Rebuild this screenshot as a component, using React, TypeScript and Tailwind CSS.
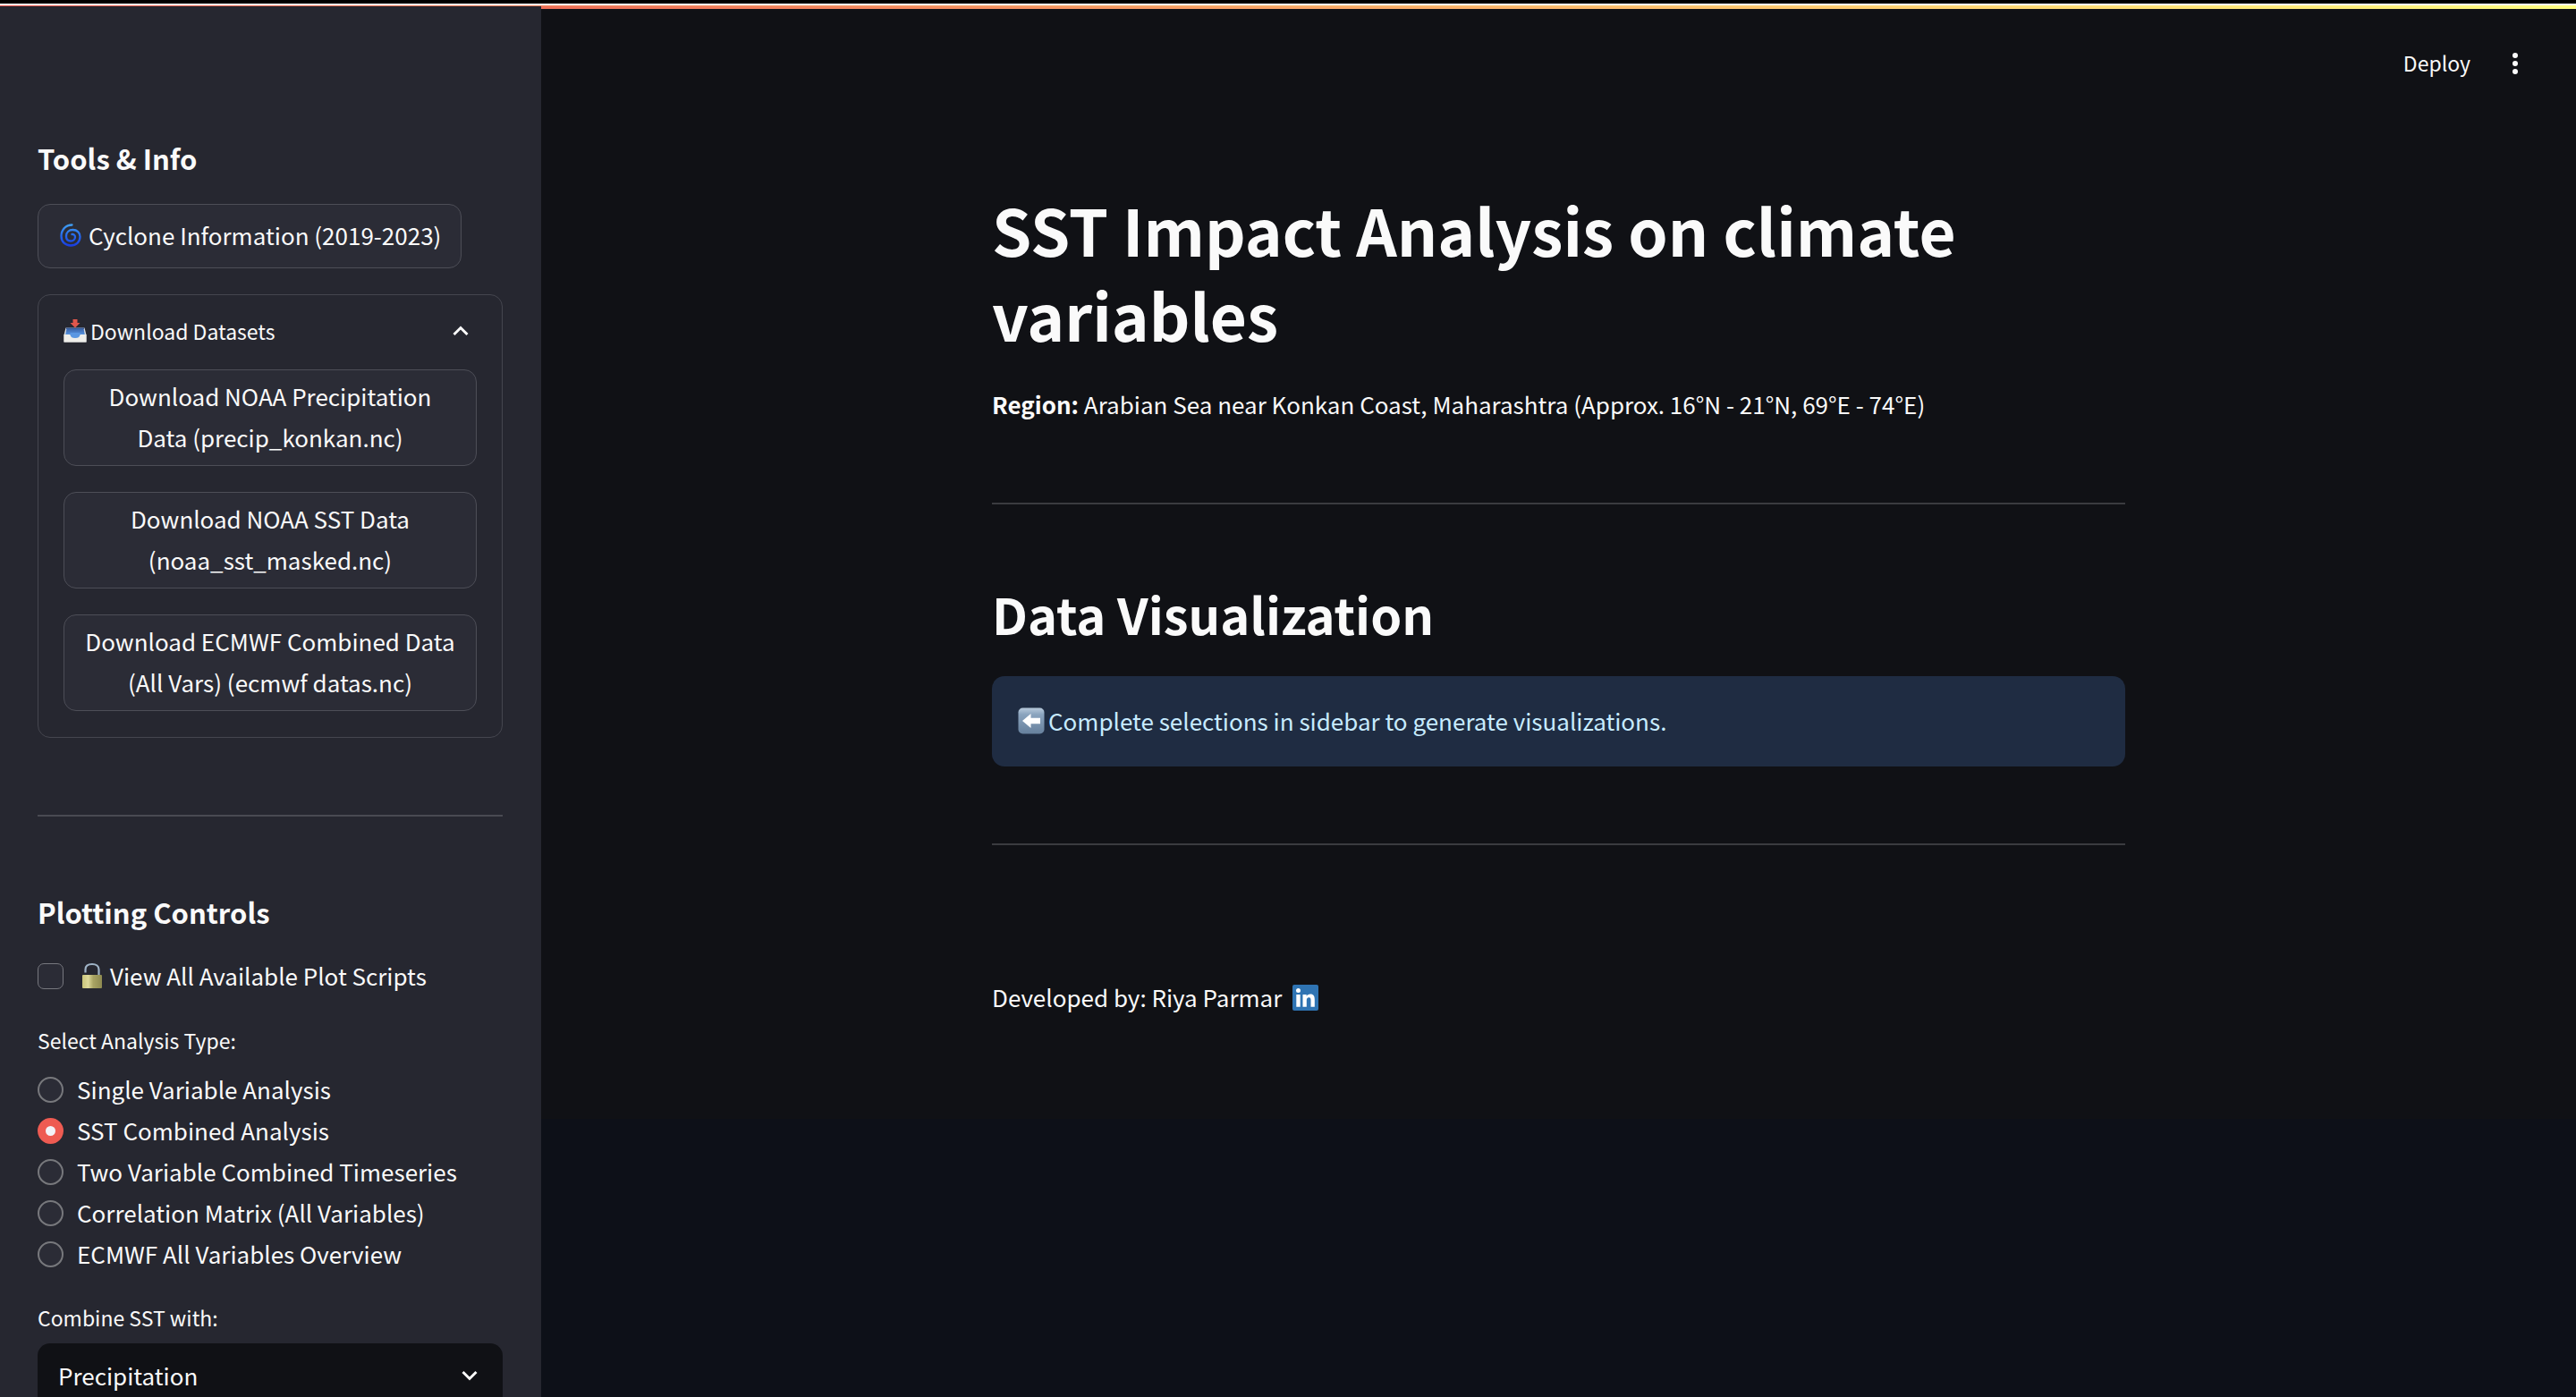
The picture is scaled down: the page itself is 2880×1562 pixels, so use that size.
import { useState } from "react";

const datasets = [
  "Download NOAA Precipitation Data (precip_konkan.nc)",
  "Download NOAA SST Data (noaa_sst_masked.nc)",
  "Download ECMWF Combined Data (All Vars) (ecmwf datas.nc)",
];

const analysisTypes = [
  "Single Variable Analysis",
  "SST Combined Analysis",
  "Two Variable Combined Timeseries",
  "Correlation Matrix (All Variables)",
  "ECMWF All Variables Overview",
];

function CycloneIcon() {
  return (
    <svg viewBox="0 0 24 26" className="h-[26px] w-6 shrink-0" fill="none" aria-hidden="true">
      <defs>
        <linearGradient id="cyclone" x1="0" y1="0" x2="0" y2="1">
          <stop offset="0" stopColor="#3f9cf0" />
          <stop offset="0.55" stopColor="#2467ee" />
          <stop offset="1" stopColor="#1a3fe0" />
        </linearGradient>
      </defs>
      <path
        d="M13.500 1.500C6.500 1.500 1.500 7 1.500 14C1.500 20.500 6 24.500 12 24.500C18 24.500 22.500 20.500 22.500 14.800C22.500 10 19 7 14.500 7C10 7 7 10 7 14C7 17.500 9 19.500 12 19.500C15 19.500 17 17.500 17 15C17 12.800 15.200 11.800 13.500 12"
        stroke="url(#cyclone)"
        strokeWidth="2.300"
        strokeLinecap="round"
      />
    </svg>
  );
}

function InboxIcon() {
  return (
    <svg viewBox="0 0 26 26" className="h-[26px] w-[26px] shrink-0" aria-hidden="true">
      <defs>
        <linearGradient id="tray" x1="0" y1="0" x2="0" y2="1">
          <stop offset="0" stopColor="#3a63a8" />
          <stop offset="1" stopColor="#5b9ae8" />
        </linearGradient>
      </defs>
      <path d="M2.500 9.500H23.500L25.500 17.500V25.500H.5V17.500Z" fill="#d9dde2" />
      <path d="M3 9.500H23V11H3Z" fill="#35578f" />
      <path d="M3.500 10.500H22.500L24 18H2Z" fill="url(#tray)" />
      <path d="M.5 17H7.500C8 20 10 21 13 21S18 20 18.500 17H25.500V25.500H.5Z" fill="#efeeea" />
      <path d="M7.500 15H18.500V17C18 20 16 21 13 21S8 20 7.500 17Z" fill="#5b97e2" />
      <path d="M10.500 0H15.500V4H18.500L13 9.500L7.500 4H10.500Z" fill="#e0574c" />
    </svg>
  );
}

function LockIcon() {
  return (
    <svg viewBox="0 0 24 30" className="h-[30px] w-6 shrink-0" aria-hidden="true">
      <defs>
        <linearGradient id="brass" x1="0" y1="0" x2="1" y2="0">
          <stop offset="0" stopColor="#c9c47a" />
          <stop offset="0.3" stopColor="#ded99a" />
          <stop offset="0.55" stopColor="#a9a464" />
          <stop offset="1" stopColor="#8d8950" />
        </linearGradient>
      </defs>
      <path
        d="M4.500 11.500V8C4.500 4 7.500 2 12 2S19.500 4 19.500 8V15"
        fill="none"
        stroke="#9fb3c6"
        strokeWidth="2.200"
      />
      <rect x="1" y="14" width="22" height="15" rx="1" fill="url(#brass)" />
    </svg>
  );
}

function ArrowIcon() {
  return (
    <svg viewBox="0 0 30 30" className="h-[30px] w-[30px] shrink-0" aria-hidden="true">
      <defs>
        <linearGradient id="key" x1="0" y1="0" x2="0" y2="1">
          <stop offset="0" stopColor="#b9cbdc" />
          <stop offset="0.25" stopColor="#8ba4be" />
          <stop offset="1" stopColor="#66809c" />
        </linearGradient>
      </defs>
      <rect x="0.500" y="0.500" width="29" height="29" rx="5" fill="url(#key)" />
      <path d="M5 15L14.500 7V11.800H25V18.200H14.500V23Z" fill="#fff" />
    </svg>
  );
}

function LinkedInIcon() {
  return (
    <svg viewBox="0 0 29 29" className="h-[29px] w-[29px]" aria-hidden="true">
      <rect width="29" height="29" rx="2" fill="#2f74b3" />
      <circle cx="6.500" cy="6.500" r="2.500" fill="#fff" />
      <path
        d="M4.300 11H8.700V24.800H4.300ZM11.500 11H15.700V12.900C16.500 11.500 18 10.600 20 10.600C23.800 10.600 24.800 13.100 24.800 16.700V24.800H20.500V17.500C20.500 15.700 20.300 14.300 18.400 14.300C16.500 14.300 15.800 15.700 15.800 17.500V24.800H11.500Z"
        fill="#fff"
      />
    </svg>
  );
}

function Chevron({ className }: { className: string }) {
  return (
    <svg viewBox="0 0 20 14" className={className} fill="none" aria-hidden="true">
      <path d="M2.500 3L10 10.500L17.500 3" stroke="#fafafa" strokeWidth="3" />
    </svg>
  );
}

function Sidebar() {
  const [open, setOpen] = useState(true);
  const [analysis, setAnalysis] = useState(analysisTypes[1]);

  return (
    <aside className="flex w-[605px] shrink-0 flex-col items-stretch overflow-hidden bg-[#262730] pt-[148px] pr-[43px] pl-[42px]">
      <h2 className="text-[31px] leading-[44px] font-semibold">Tools &amp; Info</h2>
      <button
        type="button"
        className="mt-[29px] flex min-h-[72px] items-center gap-2 self-start rounded-[14px] border border-[#4d4e57] bg-[#2b2c36] pr-[22px] pb-0.5 pl-6"
      >
        <CycloneIcon />
        Cyclone Information (2019-2023)
      </button>

      <section className="mt-[29px] rounded-[14px] border border-[#45464f] px-[28px]">
        <button
          type="button"
          aria-expanded={open}
          onClick={() => setOpen(!open)}
          className="flex h-[83px] w-full items-center gap-1 pb-[3px] text-[23px]"
        >
          <InboxIcon />
          <span className="grow text-left">Download Datasets</span>
          <Chevron className="mr-2 h-[14px] w-5 rotate-180" />
        </button>
        {open && (
          <div className="flex flex-col gap-[29px] pb-[29px]">
            {datasets.map((name) => (
              <button
                key={name}
                type="button"
                className="rounded-[14px] border border-[#4d4e57] bg-[#2b2c36] px-[22px] pt-[6px] pb-2 text-center"
              >
                {name}
              </button>
            ))}
          </div>
        )}
      </section>

      <hr className="mt-[86px] border-t-2 border-[#494a52]" />

      <h2 className="mt-[85px] text-[31px] leading-[44px] font-semibold">Plotting Controls</h2>

      <label className="mt-[26px] flex items-center">
        <input
          type="checkbox"
          className="size-[29px] shrink-0 appearance-none rounded-[7px] border border-[#77787f] bg-[#2b2c36] checked:bg-[#ee5b52]"
        />
        <span className="ml-5 flex items-center gap-2">
          <LockIcon />
          View All Available Plot Scripts
        </span>
      </label>

      <fieldset className="mt-[29px]">
        <legend className="text-[23px] leading-[40px]">Select Analysis Type:</legend>
        <div className="mt-3 flex flex-col">
          {analysisTypes.map((type) => (
            <label key={type} className="flex items-center gap-[15px]">
              <input
                type="radio"
                name="analysis"
                checked={analysis === type}
                onChange={() => setAnalysis(type)}
                className="size-[29px] shrink-0 appearance-none rounded-full border-2 border-[#77787c] bg-[#2b2c36] checked:border-[9px] checked:border-[#ee5b52] checked:bg-[#f3f3f8]"
              />
              {type}
            </label>
          ))}
        </div>
      </fieldset>

      <label htmlFor="combine" className="mt-[28px] text-[23px] leading-[40px]">
        Combine SST with:
      </label>
      <div className="relative mt-[9px]">
        <select
          id="combine"
          className="h-[72px] w-full appearance-none rounded-[14px] bg-[#101115] px-[23px] text-[#fafafa]"
        >
          <option>Precipitation</option>
        </select>
        <Chevron className="pointer-events-none absolute top-[29px] right-[27px] h-[14px] w-5" />
      </div>
    </aside>
  );
}

function Main() {
  return (
    <main className="flex grow flex-col bg-[#0d1018]">
      <div className="h-[3px] shrink-0 bg-linear-to-r from-[#ed6f58] to-[#fffd80]" />
      <div className="bg-[#101115] pb-[113px]">
        <header className="flex h-[122px] items-center justify-end gap-[44px] pr-[62px] text-[23px]">
          <button type="button" className="pb-0.5">
            Deploy
          </button>
          <button type="button" aria-label="Main menu">
            <svg viewBox="0 0 12 26" className="h-[26px] w-3" fill="#fafafa" aria-hidden="true">
              <circle cx="6" cy="4" r="3" />
              <circle cx="6" cy="13" r="3" />
              <circle cx="6" cy="22" r="3" />
            </svg>
          </button>
        </header>

        <div className="mx-auto max-w-[1325px] px-[29px] pt-[77px]">
          <h1 className="text-[71px] leading-[95px] font-bold">
            SST Impact Analysis on climate variables
          </h1>
          <p className="mt-[30px]">
            <strong className="font-bold">Region:</strong> Arabian Sea near Konkan Coast, Maharashtra
            (Approx. 16°N - 21°N, 69°E - 74°E)
          </p>
          <hr className="mt-[87px] border-t-2 border-[#3a3b3f]" />
          <h2 className="mt-[83px] text-[56px] leading-[78px] font-semibold">Data Visualization</h2>
          <div
            role="status"
            className="mt-[31px] flex min-h-[101px] items-center gap-1 rounded-[14px] bg-[#1f2c42] px-[29px] pb-0.5 text-[#c7ebff]"
          >
            <ArrowIcon />
            Complete selections in sidebar to generate visualizations.
          </div>
          <hr className="mt-[86px] border-t-2 border-[#3a3b3f]" />
          <p className="mt-[147px] flex items-center gap-3">
            Developed by: Riya Parmar
            <a href="#linkedin" aria-label="LinkedIn">
              <LinkedInIcon />
            </a>
          </p>
        </div>
      </div>
    </main>
  );
}

export default function App() {
  return (
    <div className="flex h-screen flex-col overflow-hidden bg-black pt-1 font-['Noto_Sans_CJK_SC',sans-serif] text-[26px] leading-[46px] text-[#fafafa]">
      <div className="h-0.5 shrink-0 bg-white" />
      <div className="h-px shrink-0 bg-linear-to-r from-[#ee5b52] via-[#f5b56b] to-[#fffd80]" />
      <div className="flex min-h-0 grow">
        <Sidebar />
        <Main />
      </div>
    </div>
  );
}
